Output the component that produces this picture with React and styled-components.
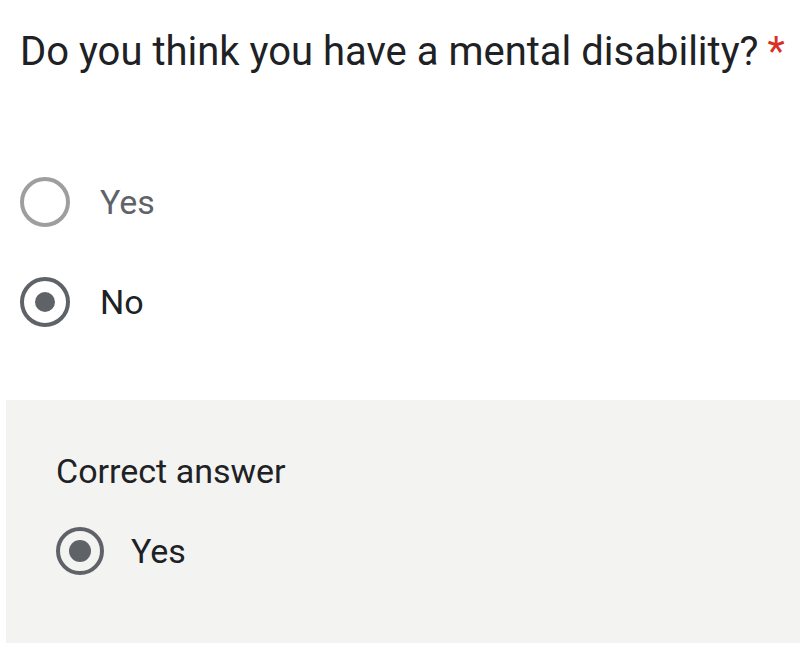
import * as React from "react";
import styled, { createGlobalStyle } from "styled-components";

const Global = createGlobalStyle`
  html, body {
    margin: 0;
    padding: 0;
    background: #ffffff;
  }
  body {
    font-family: Roboto, "Liberation Sans", Arial, sans-serif;
  }
`;

const Page = styled.div`
  width: 800px;
  height: 656px;
  overflow: hidden;
  background: #fff;
  display: flex;
  flex-direction: column;
`;

const Question = styled.div`
  padding: 29px 0 0 20px;
  font-size: 40px;
  line-height: 46px;
  color: #202124;
  white-space: nowrap;
`;

const Star = styled.span`
  color: #d93025;
  margin-left: 9px;
`;

const Options = styled.div`
  display: flex;
  flex-direction: column;
  gap: 50px;
  padding: 102px 0 0 20px;
`;

const Option = styled.div`
  display: flex;
  align-items: center;
  gap: ${(p) => p.gap || 30}px;
  height: 50px;
`;

const Ring = styled.span`
  box-sizing: border-box;
  width: ${(p) => p.size}px;
  height: ${(p) => p.size}px;
  border-radius: 50%;
  border: 4px solid ${(p) => (p.checked ? "#5f6368" : "#9e9e9e")};
  display: flex;
  align-items: center;
  justify-content: center;
  flex-shrink: 0;
`;

const Dot = styled.span`
  width: ${(p) => p.size}px;
  height: ${(p) => p.size}px;
  border-radius: 50%;
  background: #5f6368;
`;

const Label = styled.span`
  font-size: 34px;
  color: ${(p) => (p.muted ? "#5f6368" : "#202124")};
`;

const Feedback = styled.div`
  margin: 73px 0 0 6px;
  height: 243px;
  background: #f3f3f2;
  padding: 51px 0 0 50px;
  box-sizing: border-box;
  display: flex;
  flex-direction: column;
  gap: 35px;
`;

const FeedbackTitle = styled.div`
  font-size: 34px;
  line-height: 40px;
  color: #202124;
`;

const Radio = ({ checked, size = 50, dot = 20 }) => (
  <Ring size={size} checked={checked}>
    {checked && <Dot size={dot} />}
  </Ring>
);

export default function App() {
  return (
    <Page>
      <Global />
      <Question>
        Do you think you have a mental disability?<Star>*</Star>
      </Question>
      <Options>
        <Option>
          <Radio />
          <Label muted>Yes</Label>
        </Option>
        <Option>
          <Radio checked />
          <Label>No</Label>
        </Option>
      </Options>
      <Feedback>
        <FeedbackTitle>Correct answer</FeedbackTitle>
        <Option gap={27}>
          <Radio checked size={48} dot={22} />
          <Label>Yes</Label>
        </Option>
      </Feedback>
    </Page>
  );
}
